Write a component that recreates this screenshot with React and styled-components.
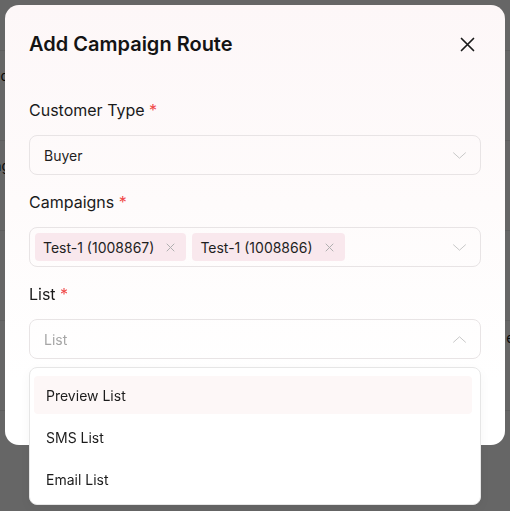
import React, { useState } from 'react';
import styled, { createGlobalStyle } from 'styled-components';

const GlobalStyle = createGlobalStyle`
  * { box-sizing: border-box; }
  html, body { margin: 0; padding: 0; overflow: hidden; }
  body {
    font-family: Inter, "Noto Sans", sans-serif;
    color: #1c1c1c;
    background: #fff;
  }
`;

const customerTypes = ['Buyer'];
const campaigns = ['Test-1 (1008867)', 'Test-1 (1008866)'];
const listOptions = ['Preview List', 'SMS List', 'Email List'];

// rows of the page behind the dialog; only their edges peek out
const pageRows = [
  { left: 'Blocked', right: '' },
  { left: 'Pending', right: '' },
  { left: '', right: '' },
  { left: '', right: 'edit' },
  { left: '', right: '' },
];

function ChevronIcon({ up }) {
  return (
    <svg width="13" height="7" viewBox="0 0 13 7" fill="none">
      <path
        d={up ? 'M0.5 6.2L6.5 0.8L12.5 6.2' : 'M0.5 0.8L6.5 6.2L12.5 0.8'}
        stroke="#c8c8c8"
        strokeWidth="1"
        strokeLinecap="round"
        strokeLinejoin="round"
      />
    </svg>
  );
}

function CloseIcon() {
  return (
    <svg width="15" height="15" viewBox="0 0 15 15" fill="none">
      <path d="M1.5 1.5L13.5 13.5M13.5 1.5L1.5 13.5" stroke="#1a1a1a" strokeWidth="1.7" strokeLinecap="round" />
    </svg>
  );
}

function RemoveIcon() {
  return (
    <svg width="9" height="9" viewBox="0 0 9 9" fill="none">
      <path d="M1 1L8 8M8 1L1 8" stroke="#b0b0b0" strokeWidth="1" strokeLinecap="round" />
    </svg>
  );
}

function App() {
  const [tags, setTags] = useState(campaigns);
  const [hovered, setHovered] = useState(0);

  return (
    <>
      <GlobalStyle />
      <Page>
        {pageRows.map((row, i) => (
          <PageRow key={i}>
            <PageLeft>{row.left}</PageLeft>
            <PageRight>{row.right}</PageRight>
          </PageRow>
        ))}
      </Page>

      <Overlay>
        <Modal>
          <Header>
            <Title>Add Campaign Route</Title>
            <CloseButton aria-label="Close">
              <CloseIcon />
            </CloseButton>
          </Header>

          <Form>
            <Field>
              <Label>Customer Type <Required>*</Required></Label>
              <SelectBox>
                <Value>{customerTypes[0]}</Value>
                <ChevronIcon />
              </SelectBox>
            </Field>

            <Field>
              <Label>Campaigns <Required>*</Required></Label>
              <SelectBox $multi>
                <Tags>
                  {tags.map((t, i) => (
                    <Tag key={t + i}>
                      {t}
                      <TagRemove onClick={() => setTags(tags.filter((_, j) => j !== i))}>
                        <RemoveIcon />
                      </TagRemove>
                    </Tag>
                  ))}
                </Tags>
                <ChevronIcon />
              </SelectBox>
            </Field>

            <Field>
              <Label>List <Required>*</Required></Label>
              <SelectWrap>
                <SelectBox>
                  <Value $placeholder>List</Value>
                  <ChevronIcon up />
                </SelectBox>
                <Menu>
                  {listOptions.map((opt, i) => (
                    <MenuItem
                      key={opt}
                      $active={hovered === i}
                      onMouseEnter={() => setHovered(i)}
                    >
                      {opt}
                    </MenuItem>
                  ))}
                </Menu>
              </SelectWrap>
            </Field>
          </Form>

          <Footer>
            <FooterButton>Cancel</FooterButton>
            <FooterButton $primary>Save</FooterButton>
          </Footer>
        </Modal>
      </Overlay>
    </>
  );
}

const Page = styled.div`
  height: 511px;
  padding-top: 50px;
  display: flex;
  flex-direction: column;
  overflow: hidden;
`;

const PageRow = styled.div`
  height: 90px;
  flex-shrink: 0;
  display: flex;
  justify-content: space-between;
  align-items: flex-start;
  padding-top: 17px;
  border-top: 1px solid #ececec;
`;

const PageLeft = styled.div`
  font-size: 14px;
  line-height: 16px;
  color: #111;
  white-space: nowrap;
  margin-left: -44px;
`;

const PageRight = styled.div`
  font-size: 14px;
  line-height: 16px;
  color: #111;
  white-space: nowrap;
  margin-right: -21px;
  margin-top: -8px;
`;

const Overlay = styled.div`
  position: fixed;
  inset: 0;
  background: rgba(0, 0, 0, 0.6);
  padding: 5px;
`;

const Modal = styled.div`
  width: 500px;
  height: 440px;
  background: linear-gradient(180deg, #fdf7f8 0%, #fefbfb 45%, #ffffff 85%);
  border-radius: 14px;
  padding: 24px 24px 0;
  display: flex;
  flex-direction: column;
`;

const Header = styled.div`
  display: flex;
  align-items: center;
  justify-content: space-between;
  height: 30px;
`;

const Title = styled.h2`
  margin: 0;
  font-size: 20px;
  font-weight: 600;
  color: #141414;
`;

const CloseButton = styled.button`
  border: none;
  background: transparent;
  padding: 0;
  margin-right: 6px;
  display: flex;
  cursor: pointer;
`;

const Form = styled.div`
  display: flex;
  flex-direction: column;
  gap: 16px;
  margin-top: 40px;
`;

const Field = styled.div`
  display: flex;
  flex-direction: column;
  gap: 14px;
`;

const Label = styled.label`
  font-size: 16px;
  line-height: 22px;
  font-weight: 400;
  color: #1a1a1a;
`;

const Required = styled.span`
  color: #f04848;
`;

const SelectWrap = styled.div`
  position: relative;
`;

const SelectBox = styled.div`
  height: 40px;
  border: 1px solid #e8e4e5;
  border-radius: 8px;
  display: flex;
  align-items: center;
  justify-content: space-between;
  padding: ${({ $multi }) => ($multi ? '0 14px 0 5px' : '0 14px 0 14px')};
`;

const Value = styled.span`
  font-size: 14px;
  color: ${({ $placeholder }) => ($placeholder ? '#a6a6a6' : '#1f1f1f')};
`;

const Tags = styled.div`
  display: flex;
  gap: 6px;
`;

const Tag = styled.span`
  display: inline-flex;
  align-items: center;
  height: 28px;
  padding: 0 11px 0 8px;
  border-radius: 4px;
  background: #f9e8ed;
  font-size: 14px;
  color: #1f1f1f;
  gap: 12px;
`;

const TagRemove = styled.span`
  display: flex;
  cursor: pointer;
`;

const Menu = styled.div`
  position: absolute;
  top: 48px;
  left: 0;
  right: 0;
  background: #fff;
  border: 1px solid #e6e6e6;
  border-radius: 8px;
  padding: 8px 8px 6px 4px;
  display: flex;
  flex-direction: column;
  gap: 4px;
  z-index: 2;
  box-shadow: 0 4px 12px rgba(0, 0, 0, 0.04);
`;

const MenuItem = styled.div`
  height: 38px;
  display: flex;
  align-items: center;
  padding: 0 12px;
  border-radius: 4px;
  font-size: 14px;
  color: #1c1c1c;
  background: ${({ $active }) => ($active ? '#fdf7f7' : 'transparent')};
  cursor: pointer;
`;

const Footer = styled.div`
  margin-top: auto;
  display: flex;
  justify-content: flex-end;
  gap: 8px;
  padding-bottom: 30px;
`;

const FooterButton = styled.button`
  height: 36px;
  padding: 0 18px;
  border-radius: 8px;
  font-family: Inter, sans-serif;
  font-size: 14px;
  border: 1px solid ${({ $primary }) => ($primary ? '#d6336c' : '#e6e6e6')};
  background: ${({ $primary }) => ($primary ? '#d6336c' : '#fff')};
  color: ${({ $primary }) => ($primary ? '#fff' : '#1c1c1c')};
`;

export default App;
